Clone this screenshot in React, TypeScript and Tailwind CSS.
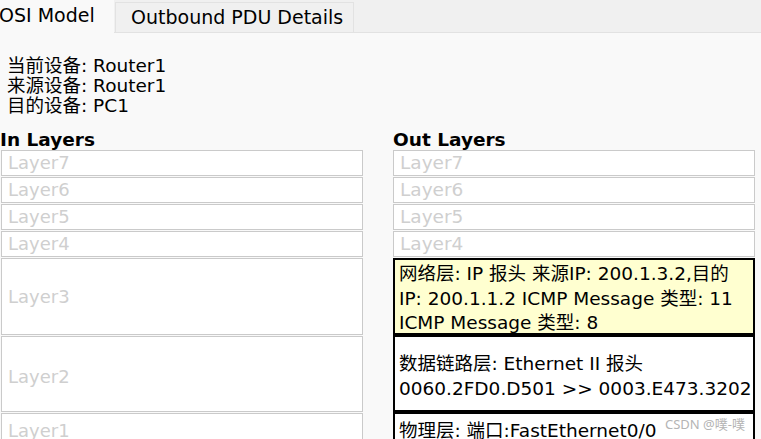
const IN_LAYERS = ['Layer7', 'Layer6', 'Layer5', 'Layer4']

function EmptyRow({ label }: { label: string }) {
  return (
    <div className="h-[26px] bg-white border border-[#cacaca] pl-[6px] flex items-center text-[#cfcfcf] leading-none">
      {label}
    </div>
  )
}

export default function App() {
  return (
    <div className="relative w-[761px] h-[439px] overflow-hidden bg-[#f9f9f9] text-[18.5px] text-black font-['DejaVu_Sans','Noto_Sans_CJK_SC',sans-serif]">
      {/* tabs */}
      <div className="flex items-end h-[33px] bg-[#f0f0f0] border-b border-[#e2e2e2] text-[19px]">
        <div className="h-[33px] -mb-px w-[115px] bg-[#f9f9f9] flex items-center -ml-[1px] pb-[2px]">
          OSI Model
        </div>
        <div className="h-[30px] ml-[1px] w-[239px] border border-b-0 border-[#e2e2e2] bg-[#f0f0f0] flex items-center pl-[15px]">
          Outbound PDU Details
        </div>
      </div>

      {/* device info */}
      <div className="pt-[23px] pl-[7px] leading-[20px]">
        <div>当前设备: Router1</div>
        <div>来源设备: Router1</div>
        <div>目的设备: PC1</div>
      </div>

      {/* layers */}
      <div className="flex gap-[30px] mt-[14px] pl-[1px]">
        <div className="w-[362px]">
          <div className="font-bold leading-[20px] -ml-[1px]">In Layers</div>
          <div className="flex flex-col gap-px text-[18px]">
            {IN_LAYERS.map(l => <EmptyRow key={l} label={l} />)}
            <div className="h-[77px] bg-white border border-[#cacaca] pl-[6px] flex items-center text-[#cfcfcf]">Layer3</div>
            <div className="h-[76px] bg-white border border-[#cacaca] pl-[6px] flex items-center text-[#cfcfcf] pt-[4px]">Layer2</div>
            <div className="h-[60px] bg-white border border-[#cacaca] pl-[6px] pt-[5px] text-[#cfcfcf] leading-[24px]">Layer1</div>
          </div>
        </div>

        <div className="w-[362px]">
          <div className="font-bold leading-[20px]">Out Layers</div>
          <div className="flex flex-col gap-px">
            {IN_LAYERS.map(l => <EmptyRow key={l} label={l} />)}
            <div className="h-[77px] bg-[#ffffd0] border-2 border-black pl-[4px] pt-[2px] leading-[24.5px]">
              <div>网络层: IP 报头 来源IP: 200.1.3.2,目的</div>
              <div>IP: 200.1.1.2 ICMP Message 类型: 11</div>
              <div>ICMP Message 类型: 8</div>
            </div>
            <div className="h-[77px] -mt-px bg-white border-2 border-black pl-[4px] pt-[5px] flex flex-col justify-center leading-[25px]">
              <div>数据链路层: Ethernet II 报头</div>
              <div>0060.2FD0.D501 &gt;&gt; 0003.E473.3202</div>
            </div>
            <div className="h-[60px] -mt-px bg-white border-2 border-black pl-[4px] pt-[5px] leading-[24px]">
              物理层: 端口:FastEthernet0/0
            </div>
          </div>
        </div>
      </div>

      <div className="absolute right-[16px] top-[415px] text-[13px] text-[#b4b4b4] leading-[18px] font-['Noto_Sans','Noto_Sans_CJK_SC',sans-serif]">
        CSDN @噗-噗
      </div>
    </div>
  )
}
